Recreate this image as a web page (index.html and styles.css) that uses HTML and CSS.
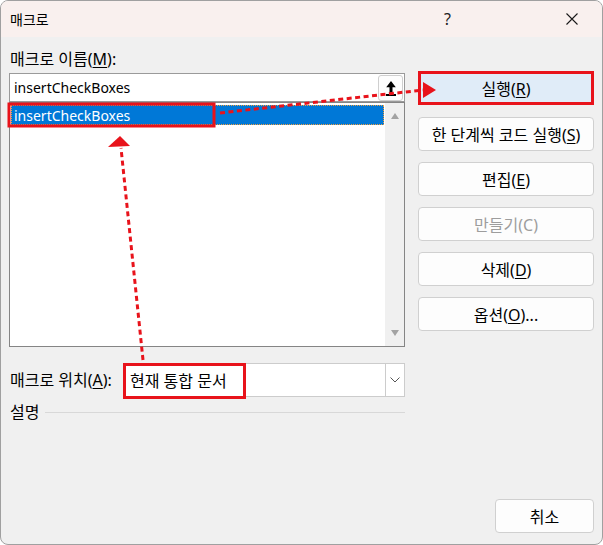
FILE: index.html
```html
<!DOCTYPE html>
<html lang="ko">
<head>
    <meta charset="UTF-8">
    <title>매크로</title>
    <link rel="stylesheet" href="styles.css">
</head>
<body>
    <div class="dialog">
        <div class="titlebar">
            <span class="title">매크로</span>
            <span class="help">?</span>
            <span class="close">
                <svg width="12" height="12" viewBox="0 0 12 12"><path d="M0.5 0.5 L11.5 11.5 M11.5 0.5 L0.5 11.5" stroke="#1a1a1a" stroke-width="1.1" fill="none"/></svg>
            </span>
        </div>

        <div class="main">
            <div class="left">
                <div class="label name-label">매크로 이름(<u>M</u>):</div>
                <div class="name-input">
                    <span class="name-text en">insertCheckBoxes</span>
                    <span class="up-btn">
                        <svg width="12" height="18" viewBox="0 0 12 18"><path d="M6 2 L1.2 8.2 H4.5 V14 H7.5 V8.2 H10.8 Z" fill="#000"/><rect x="1" y="15" width="10" height="2" fill="#000"/></svg>
                    </span>
                </div>
                <div class="macro-list">
                    <div class="list-items">
                        <div class="item selected en">insertCheckBoxes</div>
                    </div>
                    <div class="scrollbar">
                        <span class="tri tri-up"></span>
                        <span class="tri tri-down"></span>
                    </div>
                </div>
                <div class="location-row">
                    <span class="label loc-label">매크로 위치(<u>A</u>):</span>
                    <div class="combo">
                        <span class="combo-text">현재 통합 문서</span>
                        <span class="combo-btn">
                            <svg width="10" height="6" viewBox="0 0 10 6"><path d="M0.5 0.5 L5 5 L9.5 0.5" stroke="#555" stroke-width="1" fill="none"/></svg>
                        </span>
                    </div>
                </div>
                <div class="desc-row">
                    <span class="label">설명</span>
                    <span class="rule"></span>
                </div>
            </div>

            <div class="right">
                <button class="btn btn-run">실행(<u>R</u>)</button>
                <button class="btn">한 단계씩 코드 실행(<u>S</u>)</button>
                <button class="btn">편집(<u>E</u>)</button>
                <button class="btn disabled">만들기(C)</button>
                <button class="btn">삭제(<u>D</u>)</button>
                <button class="btn">옵션(<u>O</u>)...</button>
            </div>
        </div>

        <div class="footer">
            <button class="btn btn-cancel">취소</button>
        </div>

        <!-- 빨간 주석 표시 -->
        <svg class="annotations" width="603" height="545" viewBox="0 0 603 545">
            <rect x="9" y="104" width="205" height="22" fill="none" stroke="#e8131b" stroke-width="3"/>
            <rect x="124.5" y="364.5" width="120" height="33" fill="none" stroke="#e8131b" stroke-width="3"/>
            <line x1="220" y1="113" x2="423" y2="90" stroke="#e8131b" stroke-width="3" stroke-dasharray="5 3.5"/>
            <polygon points="423,82 436,90 423,98" fill="#e8131b"/>
            <line x1="143" y1="360" x2="121" y2="148" stroke="#e8131b" stroke-width="3" stroke-dasharray="5 3.5"/>
            <polygon points="120,136 108,147 130,146" fill="#e8131b"/>
        </svg>
    </div>
</body>
</html>
```

FILE: styles.css
```css
/* 기본 설정 */
* {
    margin: 0;
    padding: 0;
    box-sizing: border-box;
}

body {
    background: #ffffff;
    font-family: 'Noto Sans', 'Noto Sans CJK KR', sans-serif;
    font-size: 16px;
    color: #000;
}

u {
    text-underline-offset: 2px;
}

.en {
    font-size: 14px;
}

/* 대화 상자 */
.dialog {
    position: relative;
    width: 603px;
    height: 545px;
    background: #f0f0f0;
    border: 1px solid #a0a0a0;
    border-radius: 8px;
    overflow: hidden;
    display: flex;
    flex-direction: column;
}

.titlebar {
    height: 36px;
    background: #f9f0ee;
    display: flex;
    align-items: center;
    padding-left: 9px;
}

.title {
    flex: 1;
    font-size: 14px;
}

.help {
    font-size: 16px;
    color: #222;
    margin-right: 115px;
}

.close {
    display: flex;
    margin-right: 24px;
}

/* 본문 */
.main {
    display: flex;
    gap: 13px;
    padding: 0 8px;
}

.left {
    width: 396px;
    display: flex;
    flex-direction: column;
}

.label {
    line-height: 20px;
    white-space: nowrap;
}

.name-label {
    margin-top: 12px;
    margin-bottom: 4px;
    padding-left: 1px;
}

.name-input {
    height: 29px;
    background: #fff;
    border: 1px solid #9a9a9a;
    display: flex;
    align-items: center;
    padding: 0 1px 0 4px;
}

.name-text {
    flex: 1;
}

.up-btn {
    width: 25px;
    height: 26px;
    background: #fdfdfd;
    border: 1px solid #cfcfcf;
    border-radius: 3px;
    display: flex;
    align-items: center;
    justify-content: center;
}

.macro-list {
    height: 245px;
    background: #fff;
    border: 1px solid #858585;
    display: flex;
}

.list-items {
    flex: 1;
    padding: 2px 1px;
}

.item {
    height: 20px;
    line-height: 21px;
    padding-left: 3px;
}

.item.selected {
    background: #0078d7;
    color: #fff;
    outline: 1px dotted #f0a040;
    outline-offset: -1px;
}

.scrollbar {
    width: 19px;
    background: #f0f0f0;
    display: flex;
    flex-direction: column;
    justify-content: space-between;
    align-items: center;
    padding: 10px 0 10px;
}

.tri {
    width: 0;
    height: 0;
    border-left: 4.5px solid transparent;
    border-right: 4.5px solid transparent;
}

.tri-up {
    border-bottom: 6px solid #a3a3a3;
}

.tri-down {
    border-top: 6px solid #a3a3a3;
}

.location-row {
    display: flex;
    align-items: center;
    margin-top: 16px;
}

.loc-label {
    width: 115px;
    padding-left: 1px;
}

.combo {
    flex: 1;
    height: 34px;
    background: #fff;
    border: 1px solid #cccccc;
    display: flex;
    align-items: center;
}

.combo-text {
    flex: 1;
    padding-left: 5px;
}

.combo-btn {
    width: 19px;
    height: 100%;
    border-left: 1px solid #cccccc;
    display: flex;
    align-items: center;
    justify-content: center;
}

.desc-row {
    display: flex;
    align-items: center;
    gap: 6px;
    margin-top: 5px;
    padding-left: 1px;
}

.rule {
    flex: 1;
    height: 1px;
    background: #d8d8d8;
}

/* 오른쪽 버튼 */
.right {
    width: 176px;
    display: flex;
    flex-direction: column;
    gap: 11px;
    padding-top: 34px;
}

.btn {
    font: inherit;
    height: 34px;
    background: #fdfdfd;
    border: 1px solid #d0d0d0;
    border-radius: 4px;
    color: #000;
    text-align: center;
}

.btn-run {
    background: #e0ecf8;
    border: 3px solid #e8131b;
    border-radius: 0;
    margin-bottom: 1px;
}

.btn.disabled {
    color: #9d9d9d;
}

.footer {
    margin-top: auto;
    display: flex;
    justify-content: flex-end;
    padding: 0 8px 11px;
}

.btn-cancel {
    width: 99px;
}

.annotations {
    position: absolute;
    top: -1px;
    left: -1px;
    pointer-events: none;
}
```
